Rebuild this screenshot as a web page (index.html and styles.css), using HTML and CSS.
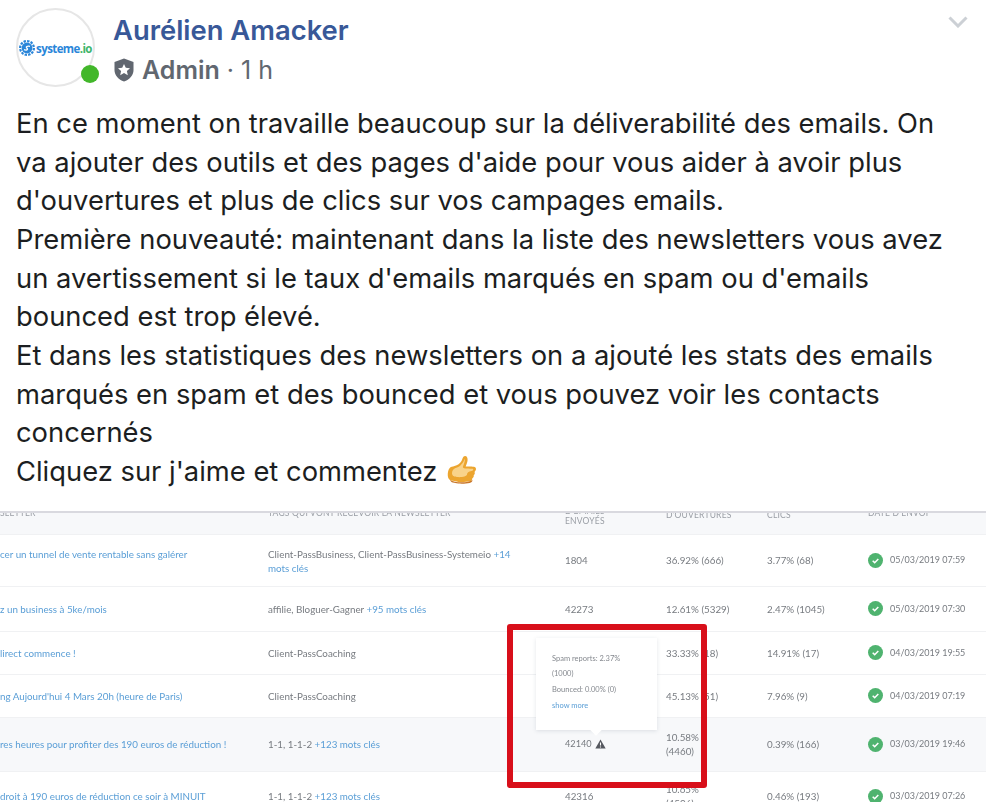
FILE: index.html
```html
<!DOCTYPE html>
<html lang="fr">
<head>
<meta charset="utf-8">
<title>Post</title>
<link rel="stylesheet" href="styles.css">
</head>
<body>
<main class="post">
  <header class="head">
    <div class="avatar">
      <div class="logo">
        <svg class="gear" viewBox="0 0 16 16" aria-hidden="true">
          <circle cx="8" cy="8" r="6.9" fill="none" stroke="#2b86d9" stroke-width="2.2" stroke-dasharray="2.4 1.2"/>
          <circle cx="8" cy="8" r="5.4" fill="#2b86d9"/>
          <path d="M5 9.6c2 .9 4.6.2 3-1.4S8 5.8 11 6.3" fill="none" stroke="#fff" stroke-width="1.3"/>
        </svg>
        <span class="logo-text">systeme<span class="logo-io">.io</span></span>
      </div>
      <span class="online"></span>
    </div>
    <div class="who">
      <div class="name">Aurélien Amacker</div>
      <div class="meta">
        <svg class="shield" viewBox="0 0 20 24" aria-hidden="true">
          <path d="M10 .5 19.5 4v8c0 5.5-4 9.5-9.500 11.500C4.500 21.500.5 17.500.5 12V4z" fill="#616770"/>
          <path d="m10 6 1.800 3.800 4.200.5-3.100 2.800.9 4.100-3.800-2.100-3.800 2.100.9-4.100L4 10.300l4.200-.5z" fill="#fff"/>
        </svg>
        <strong class="role">Admin</strong><span class="time">· 1 h</span>
      </div>
    </div>
    <svg class="chevron" viewBox="0 0 20 12" aria-hidden="true"><path d="M1.500 1.500 10 10l8.500-8.500" fill="none" stroke="#ccd0d5" stroke-width="3"/></svg>
  </header>

  <p class="message">En ce moment on travaille beaucoup sur la déliverabilité des emails. On<br>va ajouter des outils et des pages d'aide pour vous aider à avoir plus<br>d'ouvertures et plus de clics sur vos campages emails.<br>Première nouveauté: maintenant dans la liste des newsletters vous avez<br>un avertissement si le taux d'emails marqués en spam ou d'emails<br>bounced est trop élevé.<br>Et dans les statistiques des newsletters on a ajouté les stats des emails<br>marqués en spam et des bounced et vous pouvez voir les contacts<br>concernés<br>Cliquez sur j'aime et commentez <svg class="thumb" viewBox="0 0 30 31" aria-hidden="true">
      <path d="M18 1c2 0 3 2 2.500 5-.4 2.300-1.300 4-1.800 5.500 2.500-.2 6.300-.1 8.300.3 1.800.4 2.500 2 1.700 3.500-.4.800-1 1.200-1.200 1.700.6 1 .3 2.500-.8 3.200.3 1.300-.3 2.500-1.400 3 .2 1.500-.8 2.700-2.500 3.100-3 .7-8 .9-11.500.6-2.500-.2-3.500-1-5.500-1.100C3 25.600 1 24 .8 21c-.2-2.700.3-6 1.700-7.700 1.200-1.500 3-1.500 5-2.200 3-1 5.500-2.500 7-5.100C15.500 4 16 1 18 1z" fill="#eca52f"/>
      <path d="M17.500 4c1 1-.5 5-1.500 7.500-1 2.500 4 2 9 2.200 2 .1 1.500 2-.5 2.300-3 .4-4.500 1.500-4.500 3.500s-6 3-10 2.500c-3-.4-5-1-5-4 0-3 2-4.500 5-5.500 3.500-1.200 6.500-5 7.500-8.500z" fill="#f9d38a"/>
      <path d="M3 25c3 1.500 7 2.400 12 2.300 4 0 8-.7 10.500-2.300-.3 1.800-1 2.500-2.800 2.900-3 .7-8 .9-11.500.6-2.500-.2-3.500-1-5.500-1.100-1 0-2-.9-2.700-2.400z" fill="#c9772a"/>
    </svg></p>

  <section class="shot">
    <div class="table">
      <div class="row row-head">
        <div class="th th-high">SLETTER</div>
        <div class="th th-high">TAGS QUI VONT RECEVOIR LA NEWSLETTER</div>
        <div class="th th-low">D'EMAILS<br>ENVOYÉS</div>
        <div class="th th-mid">D'OUVERTURES</div>
        <div class="th th-mid">CLICS</div>
        <div class="th th-high">DATE D'ENVOI</div>
      </div>
      <div class="row row-1">
        <a class="td link top">cer un tunnel de vente rentable sans galérer</a>
        <div class="td top">Client-PassBusiness, Client-PassBusiness-Systemeio <a class="link">+14 mots clés</a></div>
        <div class="td">1804</div><div class="td">36.92% (666)</div><div class="td">3.77% (68)</div>
        <div class="td date"><svg class="ok" viewBox="0 0 16 16"><circle cx="8" cy="8" r="8"/><path d="m5 8.300 2.100 2L11 6.300"/></svg>05/03/2019 07:59</div>
      </div>
      <div class="row row-2">
        <a class="td link">z un business à 5ke/mois</a>
        <div class="td">affilie, Bloguer-Gagner <a class="link">+95 mots clés</a></div>
        <div class="td">42273</div><div class="td">12.61% (5329)</div><div class="td">2.47% (1045)</div>
        <div class="td date"><svg class="ok" viewBox="0 0 16 16"><circle cx="8" cy="8" r="8"/><path d="m5 8.300 2.100 2L11 6.300"/></svg>05/03/2019 07:30</div>
      </div>
      <div class="row row-3">
        <a class="td link">lirect commence !</a>
        <div class="td">Client-PassCoaching</div>
        <div class="td"></div><div class="td">33.33% (18)</div><div class="td">14.91% (17)</div>
        <div class="td date"><svg class="ok" viewBox="0 0 16 16"><circle cx="8" cy="8" r="8"/><path d="m5 8.300 2.100 2L11 6.300"/></svg>04/03/2019 19:55</div>
      </div>
      <div class="row row-3">
        <a class="td link">ng Aujourd'hui 4 Mars 20h (heure de Paris)</a>
        <div class="td">Client-PassCoaching</div>
        <div class="td"></div><div class="td">45.13% (51)</div><div class="td">7.96% (9)</div>
        <div class="td date"><svg class="ok" viewBox="0 0 16 16"><circle cx="8" cy="8" r="8"/><path d="m5 8.300 2.100 2L11 6.300"/></svg>04/03/2019 07:19</div>
      </div>
      <div class="row row-5">
        <a class="td link">res heures pour profiter des 190 euros de réduction !</a>
        <div class="td">1-1, 1-1-2 <a class="link">+123 mots clés</a></div>
        <div class="td count">42140<svg class="warn" viewBox="0 0 12 11"><path d="M6 .5 11.700 10.500H.3z" fill="#55585f"/><path d="M6 3.800v3.400M6 8.200v1.100" stroke="#fff" stroke-width="1.200"/></svg></div>
        <div class="td">10.58%<br>(4460)</div><div class="td">0.39% (166)</div>
        <div class="td date"><svg class="ok" viewBox="0 0 16 16"><circle cx="8" cy="8" r="8"/><path d="m5 8.300 2.100 2L11 6.300"/></svg>03/03/2019 19:46</div>
      </div>
      <div class="row row-6">
        <a class="td link">droit à 190 euros de réduction ce soir à MINUIT</a>
        <div class="td">1-1, 1-1-2 <a class="link">+123 mots clés</a></div>
        <div class="td">42316</div><div class="td">10.65%<br>(4506)</div><div class="td">0.46% (193)</div>
        <div class="td date"><svg class="ok" viewBox="0 0 16 16"><circle cx="8" cy="8" r="8"/><path d="m5 8.300 2.100 2L11 6.300"/></svg>03/03/2019 07:26</div>
      </div>
    </div>
    <div class="tip">
      <div>Spam reports: 2.37%</div>
      <div>(1000)</div>
      <div>Bounced: 0.00% (0)</div>
      <a class="link">show more</a>
    </div>
    <div class="mark"></div>
  </section>
</main>
</body>
</html>
```

FILE: styles.css
```css
html, body {
  margin: 0;
  height: 802px;
  overflow: hidden;
  background: #fff;
}

.post {
  font-family: Inter, Roboto, "Liberation Sans", sans-serif;
  color: #1c1e21;
}

.head {
  height: 105px;
  display: flex;
  align-items: flex-start;
  padding: 8px 18px 0 16px;
  box-sizing: border-box;
}

.avatar {
  position: relative;
  width: 79px;
  height: 79px;
  box-sizing: border-box;
  flex: none;
  border: 2px solid #e6e6e6;
  border-radius: 50%;
  display: flex;
  align-items: center;
  justify-content: center;
}

.logo {
  display: flex;
  align-items: center;
  gap: 1px;
  margin-top: 1px;
}

.gear {
  width: 16px;
  height: 16px;
  flex: none;
}

.logo-text {
  font-family: "Open Sans", sans-serif;
  font-size: 11.500px;
  font-weight: 700;
  letter-spacing: -0.6px;
  color: #2b86d9;
}

.logo-io {
  color: #3fb56b;
}

.online {
  position: absolute;
  right: -6px;
  bottom: 2px;
  width: 18px;
  height: 18px;
  border-radius: 50%;
  background: #42b72a;
}

.who {
  margin-left: 18px;
  flex: 1;
}

.name {
  font-size: 27.400px;
  line-height: 32px;
  font-weight: 600;
  color: #385898;
  margin-top: 6px;
}

.meta {
  display: flex;
  align-items: center;
  height: 28px;
  margin-top: 10px;
  font-size: 25px;
  color: #616770;
}

.shield {
  width: 20px;
  height: 24px;
  margin-left: 1px;
  flex: none;
}

.role {
  margin-left: 8px;
  font-weight: 600;
}

.time {
  margin-left: 7px;
}

.chevron {
  width: 20px;
  height: 12px;
  margin-top: 8px;
  flex: none;
}

.message {
  margin: 0;
  padding: 0 0 0 16px;
  font-size: 27.350px;
  line-height: 38.670px;
  white-space: nowrap;
  color: #1c1e21;
}

.thumb {
  width: 30px;
  height: 31px;
  vertical-align: -5px;
  margin-left: 2px;
}

.shot {
  position: relative;
  margin-top: 19px;
  height: 291px;
  overflow: hidden;
  border-top: 2px solid #d9d9df;
  box-sizing: border-box;
}

.table {
  font-family: Lato, "Open Sans", sans-serif;
  font-size: 9.800px;
  line-height: 14px;
  color: #777b80;
  filter: blur(0.35px);
}

.row {
  display: grid;
  grid-template-columns: 268px 297px 101px 101px 101px 118px;
  align-items: center;
  border-bottom: 1px solid #f0f1f3;
  box-sizing: border-box;
}

.row-head {
  height: 38px;
  margin-top: -16px;
  background: #f7f8fa;
  align-items: end;
}

.th {
  font-size: 8.500px;
  line-height: 10px;
  letter-spacing: 0.2px;
  color: #9a9ea5;
}

.th-high { padding-bottom: 16px; }
.th-mid { padding-bottom: 14px; }
.th-low { padding-bottom: 8px; }

.row-1 { height: 52px; }
.row-2 { height: 45px; }
.row-3 { height: 43px; }
.row-5 { height: 54px; background: #f7f8fa; }
.row-6 { height: 50px; }

.td {
  min-width: 0;
  white-space: normal;
}

.top {
  align-self: start;
  padding-top: 12px;
  padding-right: 40px;
}

.link {
  color: #5a9ed6;
}

.date {
  display: flex;
  align-items: center;
  gap: 7px;
  font-size: 9px;
}

.ok {
  width: 15px;
  height: 15px;
  flex: none;
}

.ok circle {
  fill: #4fb36f;
}

.ok path {
  fill: none;
  stroke: #fff;
  stroke-width: 1.600;
}

.count {
  display: flex;
  align-items: center;
  gap: 3px;
  font-size: 9.200px;
}

.warn {
  width: 11px;
  height: 10px;
}

.tip {
  position: absolute;
  left: 536px;
  top: 125px;
  width: 121px;
  height: 92px;
  box-sizing: border-box;
  padding: 13px 16px;
  background: #fff;
  box-shadow: 0 1px 4px rgba(60, 70, 90, 0.14);
  font-family: Lato, "Open Sans", sans-serif;
  font-size: 7.500px;
  line-height: 15.700px;
  color: #85898f;
  filter: blur(0.3px);
}

.tip::after {
  content: "";
  position: absolute;
  left: 56px;
  bottom: -4px;
  width: 8px;
  height: 8px;
  background: #fff;
  transform: rotate(45deg);
}

.mark {
  position: absolute;
  left: 507px;
  top: 111px;
  width: 200px;
  height: 164px;
  box-sizing: border-box;
  border: 6px solid #d80f1a;
  border-radius: 3px;
}
```
